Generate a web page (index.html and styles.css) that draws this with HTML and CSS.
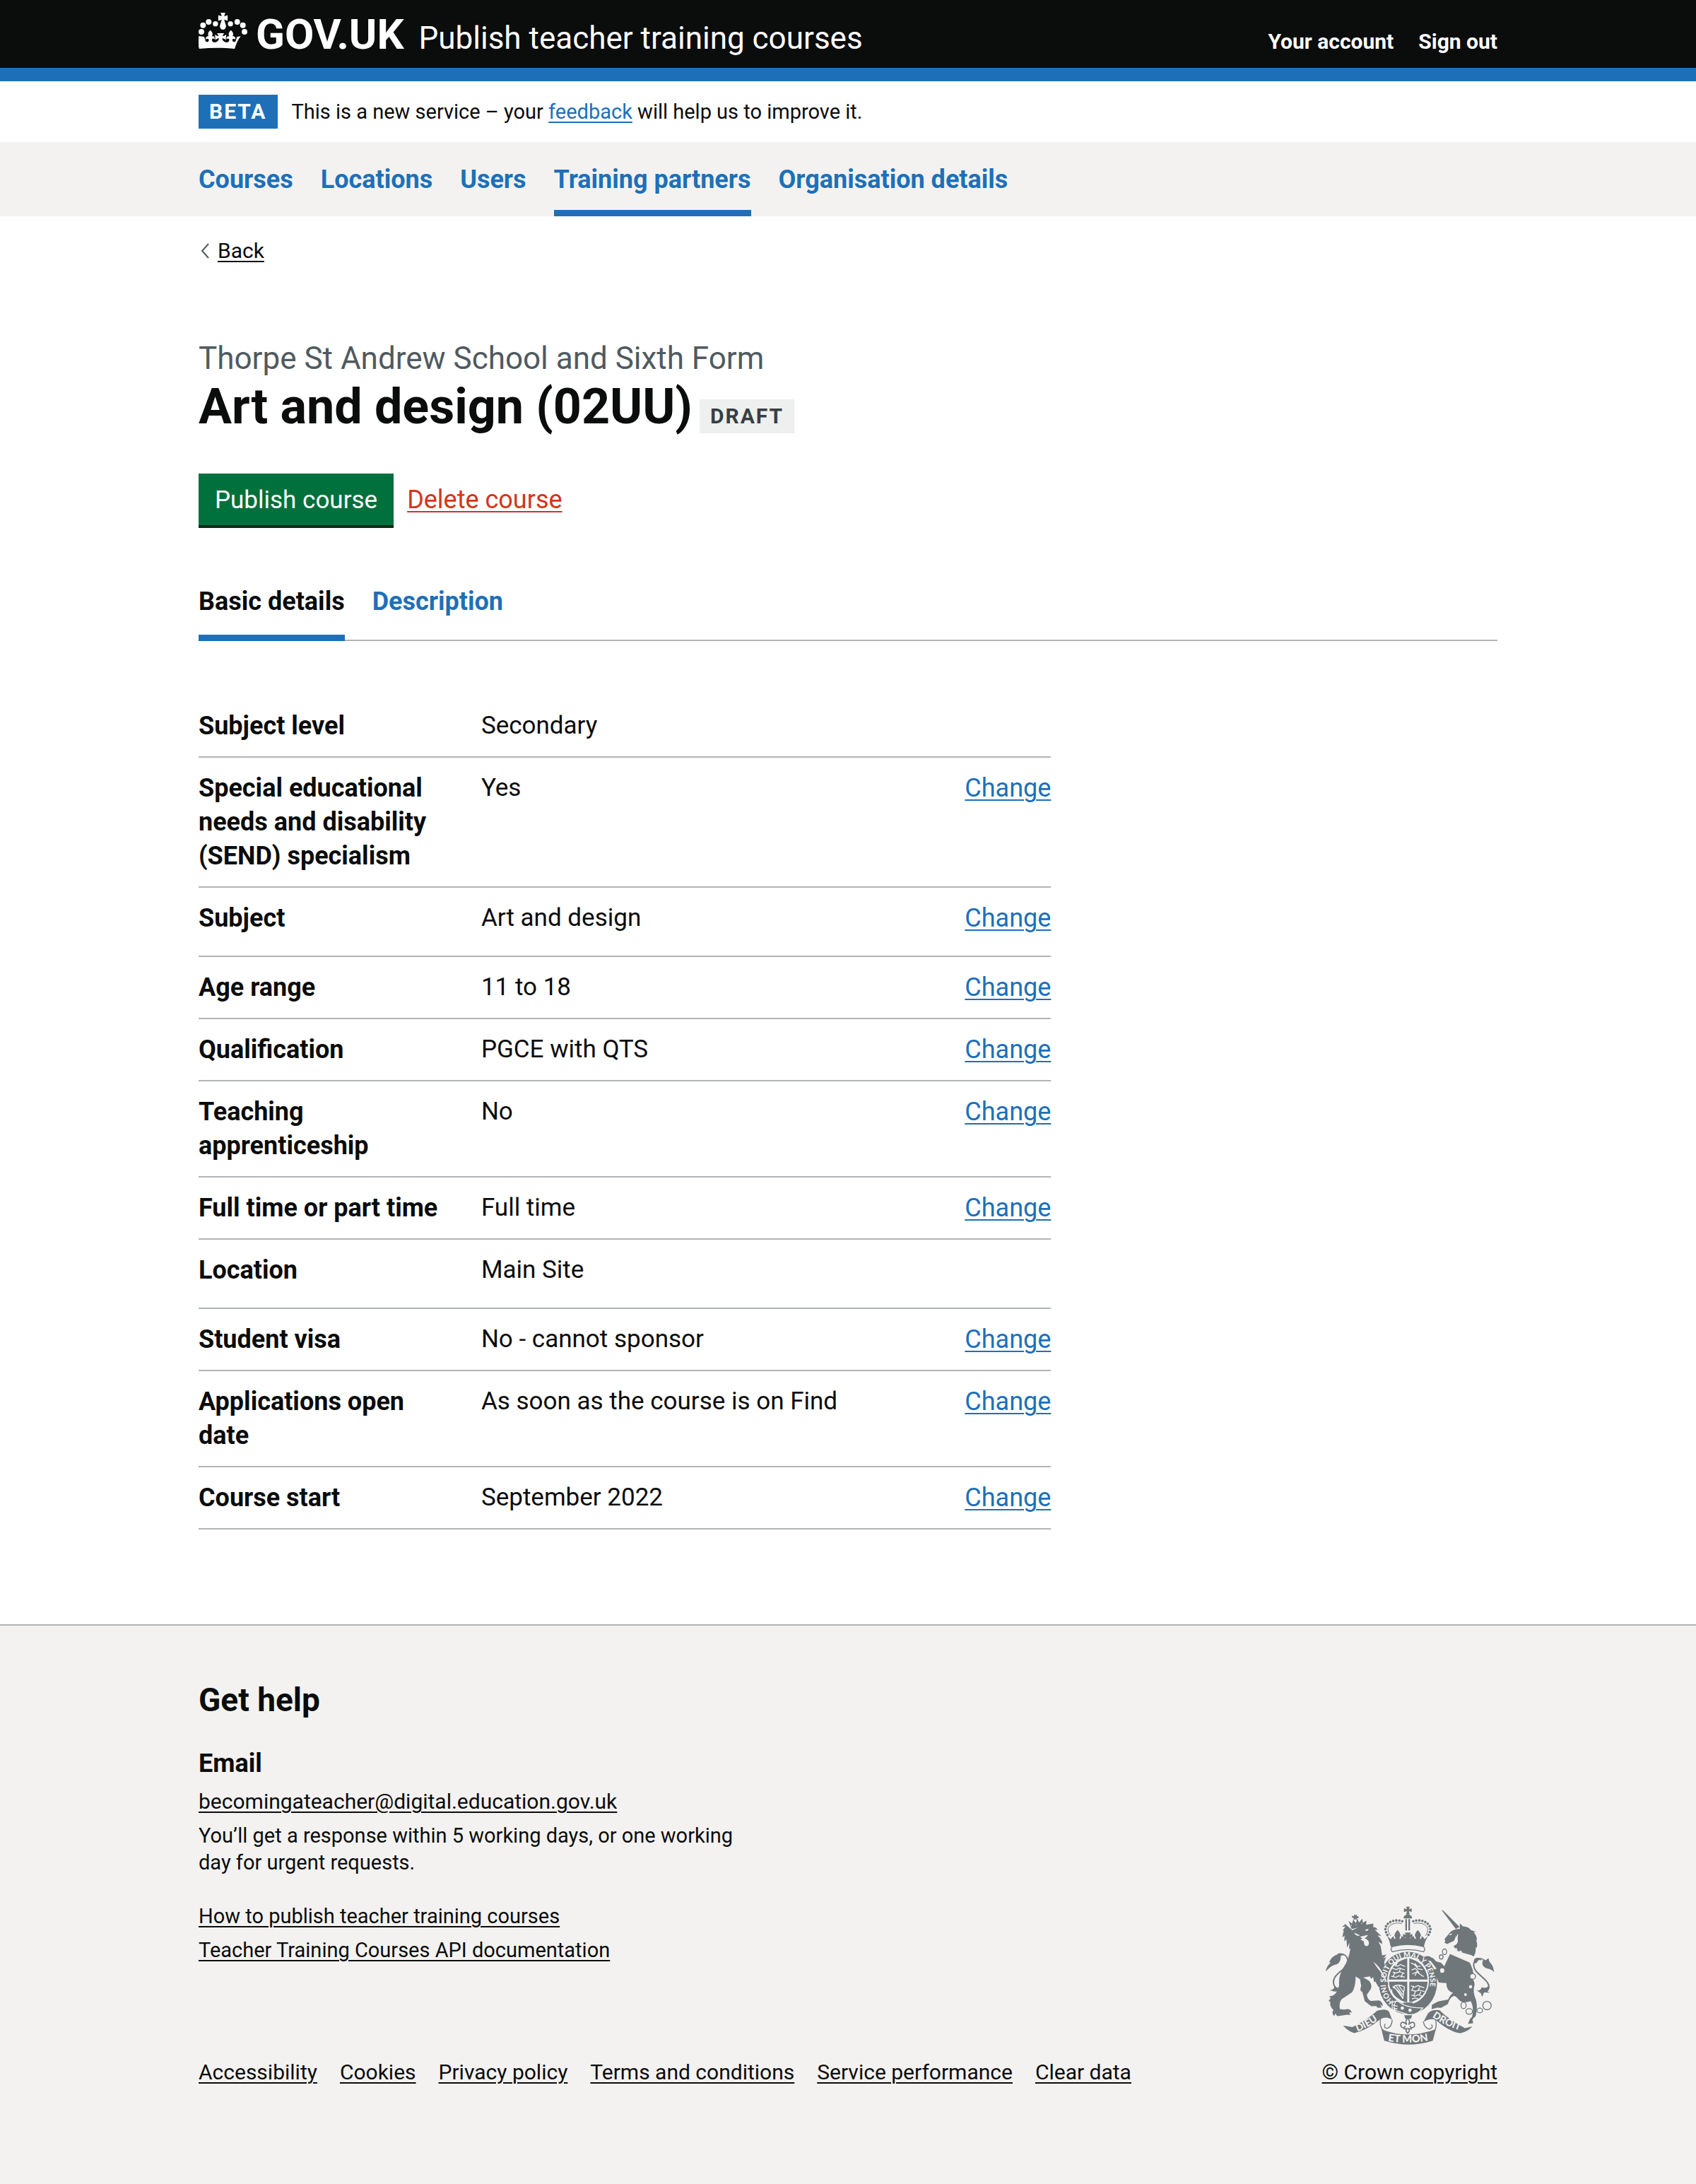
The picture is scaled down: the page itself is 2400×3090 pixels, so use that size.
FILE: index.html
```html
<!DOCTYPE html>
<html lang="en">
<head>
<meta charset="utf-8">
<meta name="viewport" content="width=device-width, initial-scale=1">
<title>Art and design (02UU) - Publish teacher training courses</title>
<link rel="stylesheet" href="styles.css">
</head>
<body>
<header class="header">
  <div class="container header-inner">
    <a class="logo" href="#">
      <svg class="logo-crown" viewBox="32 30 208 153" aria-hidden="true">
        <g fill="currentColor">
          <circle cx="44" cy="111" r="12"/><circle cx="51" cy="83" r="12"/><circle cx="75" cy="69" r="12"/><circle cx="104" cy="77" r="11"/>
          <circle cx="228" cy="111" r="12"/><circle cx="221" cy="83" r="12"/><circle cx="197" cy="69" r="12"/><circle cx="168" cy="77" r="11"/>
          <path d="M126 30h20l-5 15 15-5v24l-15-5 8 26c1 9-5 17-13 17s-14-8-13-17l8-26-15 5V40l15 5z"/>
          <path d="M40 130l16 2 6 20c7 5 14 2 14-6-1-7-8-8-13-2-2-11 4-16 12-14-5-9-3-17 7-26 10 9 12 17 7 26 9-2 14 4 11 13-5-5-11-4-11 3 0 10 11 13 20 8 7-4 10-9 10-15-7-1-11 2-15 8l-2-25c5 5 10 7 16 7l-7-12h30l-7 12c6 0 11-2 16-7l-2 25c-4-6-8-9-15-8 0 6 3 11 10 15 9 5 20 2 20-8 0-7-6-8-11-3-3-9 2-15 11-13-5-9-3-17 7-26 10 9 12 17 7 26 8-2 14 3 12 14-5-6-12-5-13 2 0 8 7 11 14 6l6-20 16-2c-12 14-20 33-26 53-48-5-100-5-151 0-6-20-14-39-22-53z"/>
        </g>
      </svg>
      <span class="logo-text">GOV.UK</span>
    </a>
    <a class="service-name" href="#">Publish teacher training courses</a>
    <nav class="account" aria-label="Account">
      <a href="#">Your account</a>
      <a href="#">Sign out</a>
    </nav>
  </div>
</header>

<div class="container phase">
  <strong class="tag tag-beta">BETA</strong>
  <span>This is a new service – your <a class="link" href="#">feedback</a> will help us to improve it.</span>
</div>

<nav class="primary" aria-label="Primary">
  <ul class="container primary-list">
    <li><a href="#">Courses</a></li>
    <li><a href="#">Locations</a></li>
    <li><a href="#">Users</a></li>
    <li><a href="#" aria-current="true">Training partners</a></li>
    <li><a href="#">Organisation details</a></li>
  </ul>
</nav>

<div class="container content">
  <a class="back" href="#">
    <svg class="back-icon" viewBox="0 0 14 22" aria-hidden="true"><path d="M12 1L3 11l9 10" fill="none" stroke="#505a5f" stroke-width="2"/></svg>
    <span>Back</span>
  </a>
  <main>
    <p class="caption">Thorpe St Andrew School and Sixth Form</p>
    <div class="title-row">
      <h1>Art and design (02UU)</h1>
      <strong class="tag tag-draft">DRAFT</strong>
    </div>
    <div class="actions">
      <button class="button" type="button">Publish course</button>
      <a class="delete" href="#">Delete course</a>
    </div>
    <nav class="tabs" aria-label="Course">
      <a href="#" aria-current="page">Basic details</a>
      <a href="#">Description</a>
    </nav>
    <dl class="summary">
      <div class="row"><dt>Subject level</dt><dd>Secondary</dd></div>
      <div class="row"><dt>Special educational needs and disability (SEND) specialism</dt><dd>Yes</dd><dd><a class="link" href="#">Change</a></dd></div>
      <div class="row row-list"><dt>Subject</dt><dd>Art and design</dd><dd><a class="link" href="#">Change</a></dd></div>
      <div class="row"><dt>Age range</dt><dd>11 to 18</dd><dd><a class="link" href="#">Change</a></dd></div>
      <div class="row"><dt>Qualification</dt><dd>PGCE with QTS</dd><dd><a class="link" href="#">Change</a></dd></div>
      <div class="row"><dt>Teaching apprenticeship</dt><dd>No</dd><dd><a class="link" href="#">Change</a></dd></div>
      <div class="row"><dt>Full time or part time</dt><dd>Full time</dd><dd><a class="link" href="#">Change</a></dd></div>
      <div class="row row-list"><dt>Location</dt><dd>Main Site</dd></div>
      <div class="row"><dt>Student visa</dt><dd>No - cannot sponsor</dd><dd><a class="link" href="#">Change</a></dd></div>
      <div class="row"><dt>Applications open date</dt><dd>As soon as the course is on Find</dd><dd><a class="link" href="#">Change</a></dd></div>
      <div class="row"><dt>Course start</dt><dd>September 2022</dd><dd><a class="link" href="#">Change</a></dd></div>
    </dl>
  </main>
</div>

<footer class="footer">
  <div class="container footer-inner">
    <div class="footer-main">
      <h2>Get help</h2>
      <h3>Email</h3>
      <ul class="help-list">
        <li class="help-email"><a href="#">becomingateacher@digital.education.gov.uk</a></li>
        <li class="help-note">You’ll get a response within 5 working days, or one working day for urgent requests.</li>
      </ul>
      <ul class="help-list">
        <li><a href="#">How to publish teacher training courses</a></li>
        <li><a href="#">Teacher Training Courses API documentation</a></li>
      </ul>
      <ul class="footer-links">
        <li><a href="#">Accessibility</a></li>
        <li><a href="#">Cookies</a></li>
        <li><a href="#">Privacy policy</a></li>
        <li><a href="#">Terms and conditions</a></li>
        <li><a href="#">Service performance</a></li>
        <li><a href="#">Clear data</a></li>
      </ul>
    </div>
    <a class="copyright" href="#">
      <svg class="crest" viewBox="160 110 722 590" aria-hidden="true">
        <defs>
          <path id="garter" d="M452 516A95 107 0 1 1 574 516"/>
          <path id="dieu" d="M298 644Q350 624 398 586"/>
          <path id="etmon" d="M428 684Q512 698 604 682"/>
          <path id="droit" d="M616 582Q676 622 750 644"/>
        </defs>
        <g fill="#6f777b">
          <!-- crown over the shield -->
          <path d="M505 112h16l-4 11 12-4v16l-12-4 4 14h-16l4-14-13 4v-16l13 4zM494 162q1-16 18-17q18 1 19 17z"/>
          <path d="M502 165h7v48h-7zM515 165h7v48h-7zM500 222h26l-6 10 12-4v18l-12-4 6 10h-28l6-10-12 4v-18l12 4z"/>
          <path d="M424 236l16 15q4-10 13-14-2 10 6 14 2-10-4-17 6-16 14-23 8 7 13 23-6 7-4 17 8-4 7-14l27 14 27-14q-1 10 7 14 2-10-4-17 5-16 13-23 8 7 14 23-6 7-4 17 8-4 6-14 9 4 13 14l16-15q-15 22-19 47H440q-4-25-16-47z"/>
          <!-- garter -->
          <ellipse cx="513" cy="437" rx="124" ry="133"/>
        </g>
        <g fill="none" stroke="#6f777b">
          <path d="M489 174C462 164 420 175 417 207Q418 225 432 241M536 174C563 164 605 175 609 207Q608 225 594 241" stroke-width="11" stroke-dasharray="0 13" stroke-linecap="round"/>
          <path d="M487 184C465 177 430 185 428 208Q428 222 440 236M538 184C560 177 596 185 598 208Q598 222 588 236" stroke-width="3"/>
        </g>
        <path d="M447 282q66-18 132 0q12 12 0 22q-66-18-132 0q-12-10 0-22z" fill="#f3f2f1" stroke="#6f777b" stroke-width="4"/>
        <ellipse cx="514" cy="426" rx="89" ry="101" fill="#f3f2f1"/>
        <g fill="#6f777b">
          <path d="M510 332v90h-78q4-70 78-90zM519 332v90h78q-6-70-78-90zM510 431v88q-72-14-78-88zM519 431v88q72-14 78-88z"/>
          <path d="M495 520h38v12h-38zM497 574h34l-5 15h-24z"/>
        </g>
        <g fill="none" stroke="#f3f2f1" stroke-width="4">
          <path d="M454 358l15 8 12-8 20 9M446 374l18 6 12-7 24 8M448 390l14 5 15-6 22 7M442 408l20 5 12-7 26 6M468 350l-8 17M482 372l-7 20M458 390l-8 20M492 394l-8 19"/>
          <path d="M526 351l17 9 13 17 20 3M528 382l16-7 17 18M542 353l11 14 14-2M531 399l19-9 30 20M553 383l-10 23"/>
          <path d="M448 454q24-17 50 0l-7 50M448 454q30 12 43 50M454 452l33 44M463 449l28 38M474 448l20 28M443 464q0 28 34 44"/>
          <path d="M526 449l17 6 12-7 28 9M526 467l19 5 15-5 24 6M528 488l15 5 13-6 21 7M538 449l-7 18M563 455l-8 16M546 470l-7 20M568 474l-7 16M530 505l13-4 15 4"/>
        </g>
        <path d="M446 522q18-18 42 5 40 17 88 16-24 34-64 28l-66-22z" fill="#6f777b" stroke="#f3f2f1" stroke-width="4"/>
        <g fill="none" stroke="#f3f2f1" stroke-width="4"><path d="M462 516q-13 15-4 38M449 530l20 6M450 543l18 5"/></g>
        <circle cx="489" cy="544" r="7" fill="#f3f2f1"/><circle cx="522" cy="553" r="7" fill="#f3f2f1"/>
        <path d="M512 587q13 12 4 27 18-18 25-4 4 18-14 17-5-2-4-8M512 587q-13 12-4 27-18-18-25-4-4 18 14 17 5-2 4-8M494 632h36M505 634q-1 10 7 17 8-7 7-17" fill="none" stroke="#6f777b" stroke-width="5"/>
        <!-- lion -->
        <g fill="#6f777b">
          <path d="M273 207l-13-35 15 12 5-17 12 15 5-20 8 17 14-16 2 18 15-10-1 27q-32 0-62 9z"/>
          <path d="M286 144l5 5 5-5-1 9h8l-1 8h-8l2 8-8-4-7 4 1-9-8-2 1-7 8 1z"/>
          <path d="M276 212Q318 190 366 184l-1 15q14 0 19 12l-12-2 13 14 15 14-16-3q20 20 20 37l-17-10 10 18 6 40 19-3-16 18 14-8-8 21 8 74 10 22-10 15-16 2-18-8-12-22-5 4-4-22-9 7-5-10-28 4 23 14q16 15 9 35l-17 25q2 20 17 26l35-2q18 8 15 26l-10-9 6 14-16 1-8-8-20 1-28-22-10-38q-14-6-5-25l-5-30-19-12q1 40-14 67l-45 30q-12 14-8 42l19 2q27-8 32 14l-11-3 5 12-15-1-13 2-28 4-8-11-5 11q-13-14-3-26-16-13-14-35l-7-4 9-12-6-7 15-3q20-9 27-45-4-40 18-74 24-36 30-83l-6 3 2-26-10 20-3-35-9 9 1-25-10 8 7-31-5 2 12-18-15 2 14-12z"/>
          <path d="M163 389q3-26 22-39l-8-1q11-27 39-35 14-4 29 2-8 3-18 5 2 36-31 40-20 9-33 28zM178 463q15 12 24-14 11 16 21 14 14 0 20-16 3 15-9 24l-28 9 7-7q-26 2-35-10z"/>
          <path d="M237 618l39 7Q340 595 382 555q38-12 51 5l13 35q-22-20-50-4Q337 640 284 650q-26-7-47-32z"/>
          <path d="M400 634q110 45 232 0l-13 49q-100 33-207 0z"/>
          <path d="M788 622l-32 7Q690 595 648 553q-30-5-49 12l-20 38q30-18 52-9 60 51 105 57 30-5 52-29z"/>
        </g>
        <g fill="none" stroke="#6f777b" stroke-width="7" stroke-linecap="round">
          <path d="M217 314c45-7 52 40 18 66-31 24-48 43-35 70 9 14 25 13 31 5" stroke-width="6"/>
          <path d="M396 592q-5 30 12 46M446 595q-2 30-22 35-16-2-8-18M631 595q6 25-3 43M579 603q5 25 25 30 18-4 10-18" stroke-width="4"/>
        </g>
        <g fill="#f3f2f1">
          <path d="M284 222l25 12q-18 6-25-12zM330 210l16-4q-6 17-16 4zM308 240l35-8-7 10-8 4q16 6 19 18 0 16-12 16-10-2-10-20l-14-8 8-6z"/>
          <path d="M365 346q35 24 59 86l-4-1q-16-35-41-64z"/>
          <circle cx="272" cy="192" r="2"/><circle cx="292" cy="190" r="2"/><circle cx="315" cy="184" r="2"/>
        </g>
        <!-- unicorn -->
        <g fill="#6f777b">
          <path d="M656 126l7 2 70 70-16 9zM734 183l14 13q25 2 31 14l24 10-10 1q16 18 13 35l-3-4q8 22 3 35l-4-3q2 22-9 40l-12-6-60-17-14-22q30-11 12-45l-9 23-19 9-10 5-12-5 3-9-3-8 20-23q12-20 45-20z"/>
          <path d="M693 312l18 8 62 24q25 44 18 80 8 12 5 25-8 25 7 60 8 30-1 68l-14 15 3 16-22 3 8-20 9-10q10-40-6-67-35 12-50-6-15-18-24-15-15 6-23 34l-29 16-17-1-23 7 1-19 26-14 43-9q10-20 21-28-30-10-28-42l-32-2-16-32-19-5-1-18 27-3-26-34-17-3-12-14q23-8 29 1l11 5 12 13 21 6 14 15z"/>
          <path d="M647 396l-15-6 3-21 11 2 22 23 3 27-17-12z"/>
          <path d="M795 352q-5-18 10-22 24-2 38 10l14-9q-1 14 13 27 7 10 10 32-12-12-30-15-28-8-17-37-15-8-28 14zM802 465q16 12 26-10 18 8 30-7 2 18-12 22l16 8-25-1-8 20-5-16z"/>
        </g>
        <path d="M826 337c-38-8-42 30-16 57 28 26 56 44 46 69-8 15-25 10-30 0" fill="none" stroke="#6f777b" stroke-width="6"/>
        <path d="M697 282l9 13 13-4 5 15 15-4 4 15 17-2 4 15 16-4-7 20-80-35z" fill="none" stroke="#f3f2f1" stroke-width="5"/>
        <path d="M725 230q-1 30-26 41l-12-2M690 232l10-4" fill="none" stroke="#f3f2f1" stroke-width="4"/>
        <g fill="none" stroke="#6f777b" stroke-width="4">
          <ellipse cx="669" cy="304" rx="9" ry="12"/><ellipse cx="655" cy="326" rx="8" ry="9"/><ellipse cx="659" cy="384" rx="11" ry="12" fill="#f3f2f1"/><circle cx="789" cy="409" r="12" fill="#f3f2f1"/><circle cx="780" cy="453" r="9" fill="#f3f2f1"/><circle cx="758" cy="486" r="8" fill="#f3f2f1"/>
          <ellipse cx="750" cy="532" rx="11" ry="14"/><ellipse cx="774" cy="558" rx="14" ry="12"/><ellipse cx="819" cy="554" rx="12" ry="10"/><circle cx="850" cy="533" r="18"/>
        </g>
        <g class="crest-text">
          <text font-size="31"><textPath href="#garter">HONI SOIT QUI MAL Y PENSE</textPath></text>
          <text font-size="42"><textPath href="#dieu">DIEU</textPath></text>
          <text font-size="44"><textPath href="#etmon">ET MON</textPath></text>
          <text font-size="42"><textPath href="#droit">DROIT</textPath></text>
        </g>
      </svg>
      <span>© Crown copyright</span>
    </a>
  </div>
</footer>
</body>
</html>
```
FILE: styles.css
```css
* {
  box-sizing: border-box;
}

body {
  margin: 0;
  min-height: 100vh;
  display: flex;
  flex-direction: column;
  background: #fff;
  color: #0b0c0c;
  font-family: Roboto, "Liberation Sans", sans-serif;
  font-size: 35px;
  line-height: 48px;
}

h1, h2, h3, p, ul, dl, dd {
  margin: 0;
}

ul {
  padding: 0;
  list-style: none;
}

a {
  color: inherit;
  text-decoration-thickness: 2px;
  text-underline-offset: 4px;
}

.container {
  width: calc(100% - 120px);
  max-width: 1838px;
  margin: 0 auto;
}

.link {
  color: #1d70b8;
}

.header {
  background: #0b0c0c;
  color: #fff;
  border-bottom: 19px solid #1d70b8;
}

.header a {
  text-decoration: none;
}

.header-inner {
  display: flex;
  align-items: baseline;
  padding: 18px 0 17px;
}

.logo {
  display: flex;
  align-items: baseline;
  gap: 12px;
  margin-right: 21px;
}

.logo-crown {
  width: 69px;
  height: 51px;
  margin-bottom: -3px;
}

.logo-text {
  font-size: 60px;
  font-weight: 700;
  line-height: 60px;
}

.service-name {
  font-size: 44px;
}

.account {
  display: flex;
  gap: 35px;
  margin-left: auto;
  font-size: 30px;
  font-weight: 700;
  line-height: 38px;
}

.phase {
  display: flex;
  gap: 20px;
  padding: 19px 0;
  font-size: 29px;
}

.tag {
  padding: 0 15px;
  font-size: 30px;
  font-weight: 700;
  line-height: 48px;
  letter-spacing: 2px;
}

.tag-beta {
  background: #1d70b8;
  color: #fff;
}

.tag-draft {
  background: #eeefef;
  color: #383f43;
}

.primary {
  background: #f3f2f1;
}

.primary-list {
  display: flex;
  gap: 39px;
  font-size: 36px;
  font-weight: 700;
}

.primary-list a {
  display: block;
  padding: 29px 0 19px;
  border-bottom: 9px solid transparent;
  color: #1d70b8;
  text-decoration: none;
}

.primary-list a[aria-current] {
  border-color: #1d70b8;
}

.content {
  padding: 30px 0 134px;
}

.back {
  display: flex;
  align-items: center;
  gap: 11px;
  width: max-content;
  padding-left: 2px;
  font-size: 30px;
  line-height: 38px;
}

.back-icon {
  width: 14px;
  height: 22px;
}

.caption {
  margin-top: 103px;
  color: #505a5f;
  font-size: 44px;
  line-height: 60px;
}

.title-row {
  display: flex;
  align-items: baseline;
  gap: 10px;
}

h1 {
  font-size: 70px;
  line-height: 76px;
}

.actions {
  display: flex;
  align-items: baseline;
  gap: 19px;
  margin-top: 57px;
}

.button {
  padding: 14px 23px 11px;
  border: 0;
  border-bottom: 4px solid #002d18;
  background: #00703c;
  color: #fff;
  font: inherit;
}

.delete {
  color: #d4351c;
  font-size: 36px;
}

.tabs {
  display: flex;
  gap: 39px;
  margin-top: 80px;
  border-bottom: 2px solid #b1b4b6;
  font-size: 36px;
  font-weight: 700;
}

.tabs a {
  margin-bottom: -2px;
  padding-bottom: 23px;
  border-bottom: 9px solid transparent;
  color: #1d70b8;
  text-decoration: none;
}

.tabs a[aria-current] {
  border-color: #1d70b8;
  color: #0b0c0c;
}

.summary {
  width: calc(66.6667% - 19px);
  margin-top: 77px;
}

.row {
  display: grid;
  grid-template-columns: 30% 1fr auto;
  column-gap: 38px;
  padding: 19px 0;
  border-bottom: 2px solid #b1b4b6;
}

.row-list {
  padding-bottom: 29px;
}

.row .link {
  display: block;
  font-size: 36px;
}

dt {
  font-weight: 700;
  font-size: 36px;
}

.footer {
  flex: 1;
  padding: 81px 0 139px;
  border-top: 2px solid #b1b4b6;
  background: #f3f2f1;
  font-size: 30px;
  line-height: 38px;
}

.footer-inner {
  display: flex;
  justify-content: space-between;
  align-items: flex-end;
}

h2 {
  font-size: 46px;
  line-height: 48px;
}

h3 {
  margin-top: 42px;
  font-size: 36px;
  line-height: 48px;
}

.help-list {
  display: grid;
  gap: 10px;
  margin-bottom: 38px;
  font-size: 29px;
}

h3 + .help-list {
  margin-top: 11px;
}

.help-email {
  font-size: 30px;
}

.help-note {
  max-width: 800px;
}

.footer-links {
  display: flex;
  gap: 32px;
  margin-top: 135px;
}

.copyright {
  display: flex;
  flex-direction: column;
  align-items: center;
  gap: 20px;
}

.crest {
  width: 240px;
  height: 196px;
}

.crest-text {
  fill: #f3f2f1;
  font-family: Lato, sans-serif;
  font-weight: 900;
}
```
